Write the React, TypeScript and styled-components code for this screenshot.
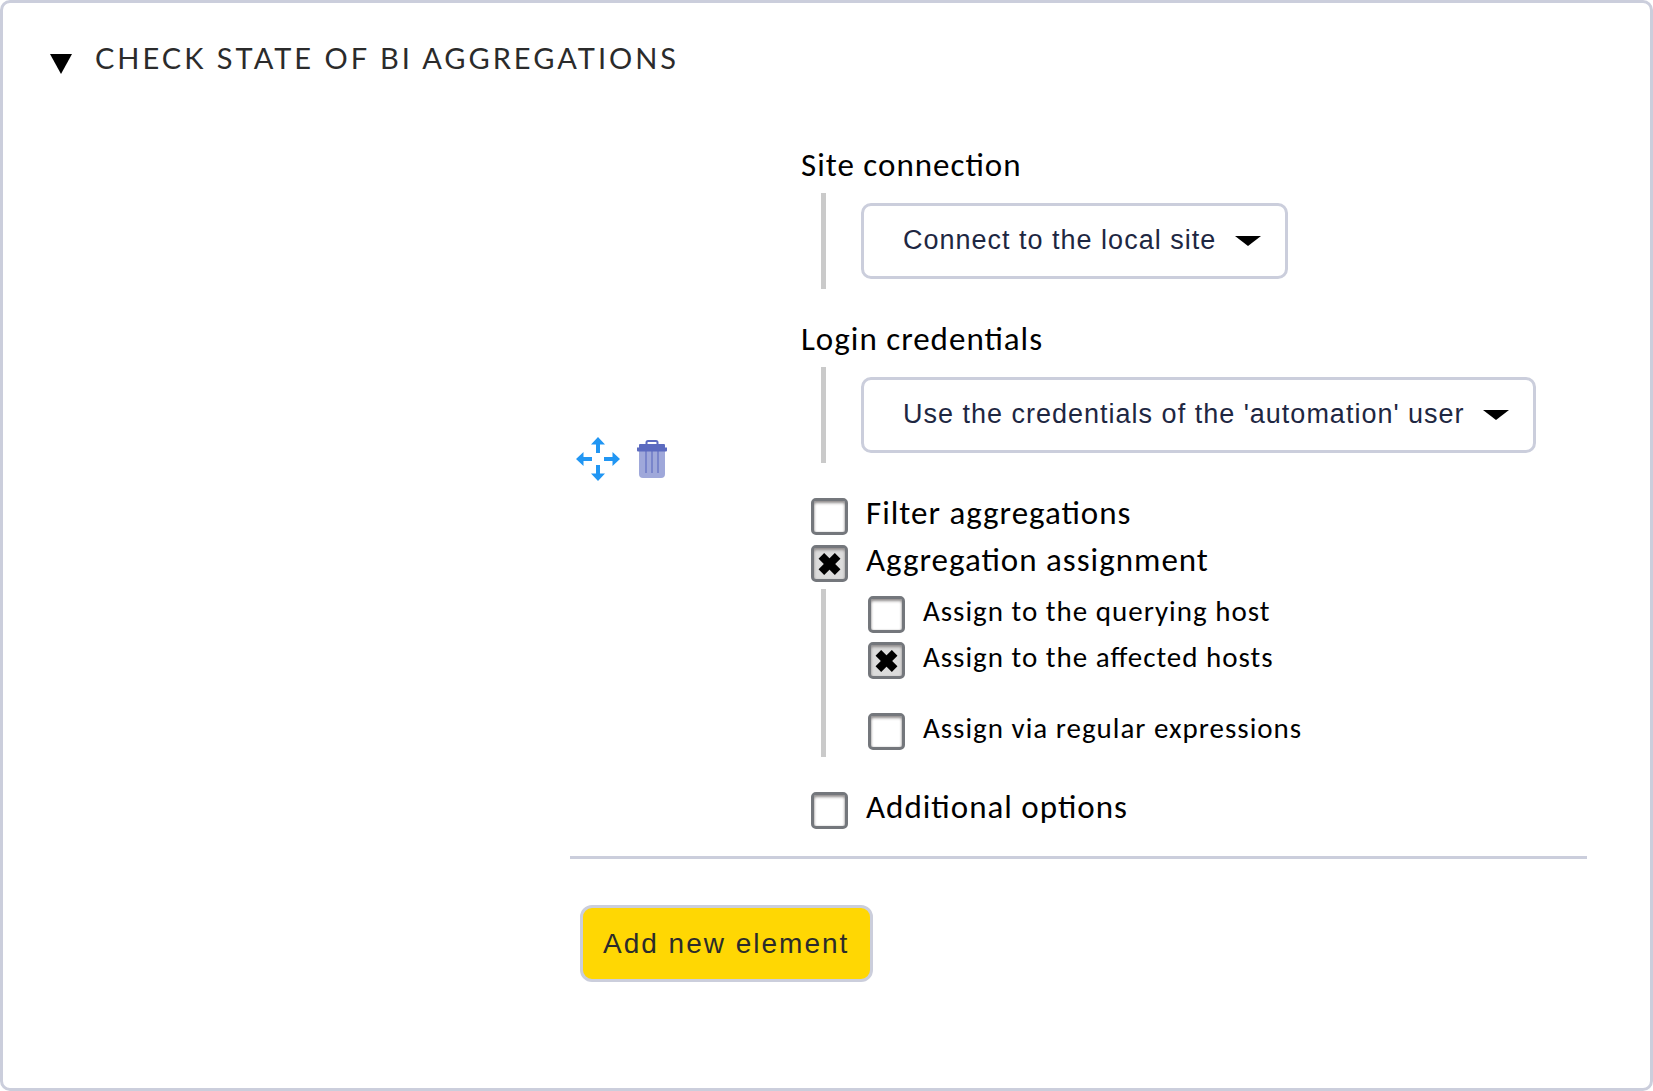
import React, { useId, useState } from "react";
import styled, { createGlobalStyle } from "styled-components";

const GlobalStyle = createGlobalStyle`
  *, *::before, *::after { box-sizing: border-box; }
  body {
    margin: 0;
    background: #fff;
    color: #000;
    font-family: Carlito, Lato, "Liberation Sans", sans-serif;
    font-feature-settings: "liga" 1;
  }
`;

const line = "#cbcedc";

const Panel = styled.section`
  min-height: 100vh;
  padding: 34px 63px 60px 47px;
  border: 3px solid ${line};
  border-radius: 10px;
`;

const Title = styled.h1`
  margin: 0;
  font-family: Lato, "Liberation Sans", sans-serif;
  font-size: 29px;
  font-weight: 400;
  line-height: 42px;
`;

const Toggle = styled.button`
  display: flex;
  align-items: center;
  gap: 23px;
  padding: 0;
  border: 0;
  background: none;
  color: #2b2b2b;
  font: inherit;
  letter-spacing: 3px;
  text-transform: uppercase;
  cursor: pointer;
`;

const Triangle = styled.svg<{ $open: boolean }>`
  width: 22px;
  height: 20px;
  margin-top: 12px;
  transform: rotate(${(p) => (p.$open ? 0 : -90)}deg);
`;

const Body = styled.div`
  padding: 66px 0 0 520px;
`;

const Element = styled.div`
  display: flex;
  align-items: flex-start;
  gap: 134px;
  padding: 0 0 27px 6px;
  border-bottom: 3px solid ${line};
`;

const Actions = styled.div`
  display: flex;
  flex: none;
  align-items: center;
  gap: 17px;
  padding-top: 292px;
`;

const IconButton = styled.button`
  display: flex;
  padding: 0;
  border: 0;
  background: none;
  cursor: pointer;
`;

const Fields = styled.div`
  display: flex;
  flex: 1;
  flex-direction: column;
  gap: 30px;
`;

const FieldLabel = styled.label`
  display: block;
  margin-bottom: 8px;
  font-size: 33px;
  line-height: 40px;
  letter-spacing: 1px;
`;

const Indent = styled.div`
  margin-left: 20px;
  padding: 10px 0 10px 35px;
  border-left: 5px solid #cacaca;
`;

const SelectBox = styled.div`
  position: relative;
  width: fit-content;
`;

const Select = styled.select`
  display: block;
  height: 76px;
  padding: 0 68px 3px 39px;
  appearance: none;
  border: 3px solid ${line};
  border-radius: 10px;
  background: #fff;
  color: #1e2742;
  font-family: "Liberation Sans", Arial, sans-serif;
  font-size: 27px;
  letter-spacing: 1px;
`;

const Arrow = styled.svg`
  position: absolute;
  top: 33px;
  right: 27px;
  width: 26px;
  height: 10px;
  pointer-events: none;
`;

const Options = styled.div`
  display: flex;
  flex-direction: column;
  gap: 5px;
`;

const SubOptions = styled.div`
  display: flex;
  flex-direction: column;
  gap: 6px;
  margin: 2px 0 0 20px;
  padding: 4px 0 7px 42px;
  border-left: 5px solid #cacaca;
`;

const Spacer = styled.div`
  height: 19px;
`;

const CheckRow = styled.div<{ $small?: boolean }>`
  display: flex;
  align-items: flex-start;
  gap: 18px;
  padding-left: ${(p) => (p.$small ? 0 : 10)}px;

  label {
    font-size: ${(p) => (p.$small ? 29 : 33)}px;
    line-height: ${(p) => (p.$small ? 36 : 40)}px;
    letter-spacing: 1px;
  }
  input {
    margin-top: ${(p) => (p.$small ? 3 : 5)}px;
  }
`;

const Box = styled.input`
  display: grid;
  flex: none;
  place-items: center;
  width: 37px;
  height: 37px;
  margin: 0;
  appearance: none;
  border: 3px solid #74777c;
  border-radius: 5px;
  background: #fff;
  box-shadow: inset 0 2px 3px #8f8b8b, inset 0 0 2px #ccc;

  &:checked {
    background: #dcdcdc;
  }
  &:checked::before,
  &:checked::after {
    content: "";
    grid-area: 1 / 1;
    width: 23px;
    height: 8px;
    background: #000;
    transform: rotate(45deg);
  }
  &:checked::after {
    transform: rotate(-45deg);
  }
`;

const AddButton = styled.button`
  height: 77px;
  margin: 46px 0 0 10px;
  padding: 0 21px 0 20px;
  border: 3px solid ${line};
  border-radius: 12px;
  background: #ffd703;
  color: #2b2b2b;
  font-family: "Liberation Sans", Arial, sans-serif;
  font-size: 28px;
  letter-spacing: 2px;
  cursor: pointer;
`;

function SelectField({ label, options }: { label: string; options: string[] }) {
  const id = useId();
  return (
    <div>
      <FieldLabel htmlFor={id}>{label}</FieldLabel>
      <Indent>
        <SelectBox>
          <Select id={id}>
            {options.map((o) => (
              <option key={o}>{o}</option>
            ))}
          </Select>
          <Arrow viewBox="0 0 26 10" aria-hidden="true">
            <path d="M0 0h26L13 10z" />
          </Arrow>
        </SelectBox>
      </Indent>
    </div>
  );
}

function Check({ label, checked = false, small }: { label: string; checked?: boolean; small?: boolean }) {
  const id = useId();
  return (
    <CheckRow $small={small}>
      <Box type="checkbox" id={id} defaultChecked={checked} />
      <label htmlFor={id}>{label}</label>
    </CheckRow>
  );
}

const MoveIcon = () => (
  <svg width="44" height="44" viewBox="0 0 44 44" fill="#2196f3" aria-hidden="true">
    {[0, 90, 180, 270].map((a) => (
      <path key={a} transform={`rotate(${a} 22 22)`} d="M22 0l7 7.500h-5V16h-4V7.500h-5z" />
    ))}
  </svg>
);

const TrashIcon = () => (
  <svg width="30" height="38" viewBox="0 0 30 38" aria-hidden="true">
    <path d="M2 10h26v24a4 4 0 0 1-4 4H6a4 4 0 0 1-4-4z" fill="#9fa8da" />
    <path d="M8 11h2v22H8zM14 11h2v22h-2zM20 11h2v22h-2z" fill="#7985cb" />
    <path d="M9.500 5V2.500A1.500 1.500 0 0 1 11 1h8a1.500 1.500 0 0 1 1.500 1.500V5" fill="none" stroke="#5c6bc0" strokeWidth="2" />
    <path d="M2 5a1 1 0 0 1 1-1h24a1 1 0 0 1 1 1v2.500h2v3a1 1 0 0 1-1 1H1a1 1 0 0 1-1-1v-3h2z" fill="#5c6bc0" />
  </svg>
);

export default function App() {
  const [open, setOpen] = useState(true);
  return (
    <>
      <GlobalStyle />
      <Panel>
        <Title>
          <Toggle type="button" aria-expanded={open} onClick={() => setOpen(!open)}>
            <Triangle $open={open} viewBox="0 0 22 20" aria-hidden="true">
              <path d="M0 0h22L11 20z" />
            </Triangle>
            Check state of BI aggregations
          </Toggle>
        </Title>
        {open && (
          <Body>
            <Element>
              <Actions>
                <IconButton type="button" aria-label="Move this entry">
                  <MoveIcon />
                </IconButton>
                <IconButton type="button" aria-label="Delete this entry">
                  <TrashIcon />
                </IconButton>
              </Actions>
              <Fields>
                <SelectField label="Site connection" options={["Connect to the local site"]} />
                <SelectField label="Login credentials" options={["Use the credentials of the 'automation' user"]} />
                <Options>
                  <Check label="Filter aggregations" />
                  <Check label="Aggregation assignment" checked />
                  <SubOptions>
                    <Check small label="Assign to the querying host" />
                    <Check small label="Assign to the affected hosts" checked />
                    <Spacer />
                    <Check small label="Assign via regular expressions" />
                  </SubOptions>
                </Options>
                <Check label="Additional options" />
              </Fields>
            </Element>
            <AddButton type="button">Add new element</AddButton>
          </Body>
        )}
      </Panel>
    </>
  );
}
